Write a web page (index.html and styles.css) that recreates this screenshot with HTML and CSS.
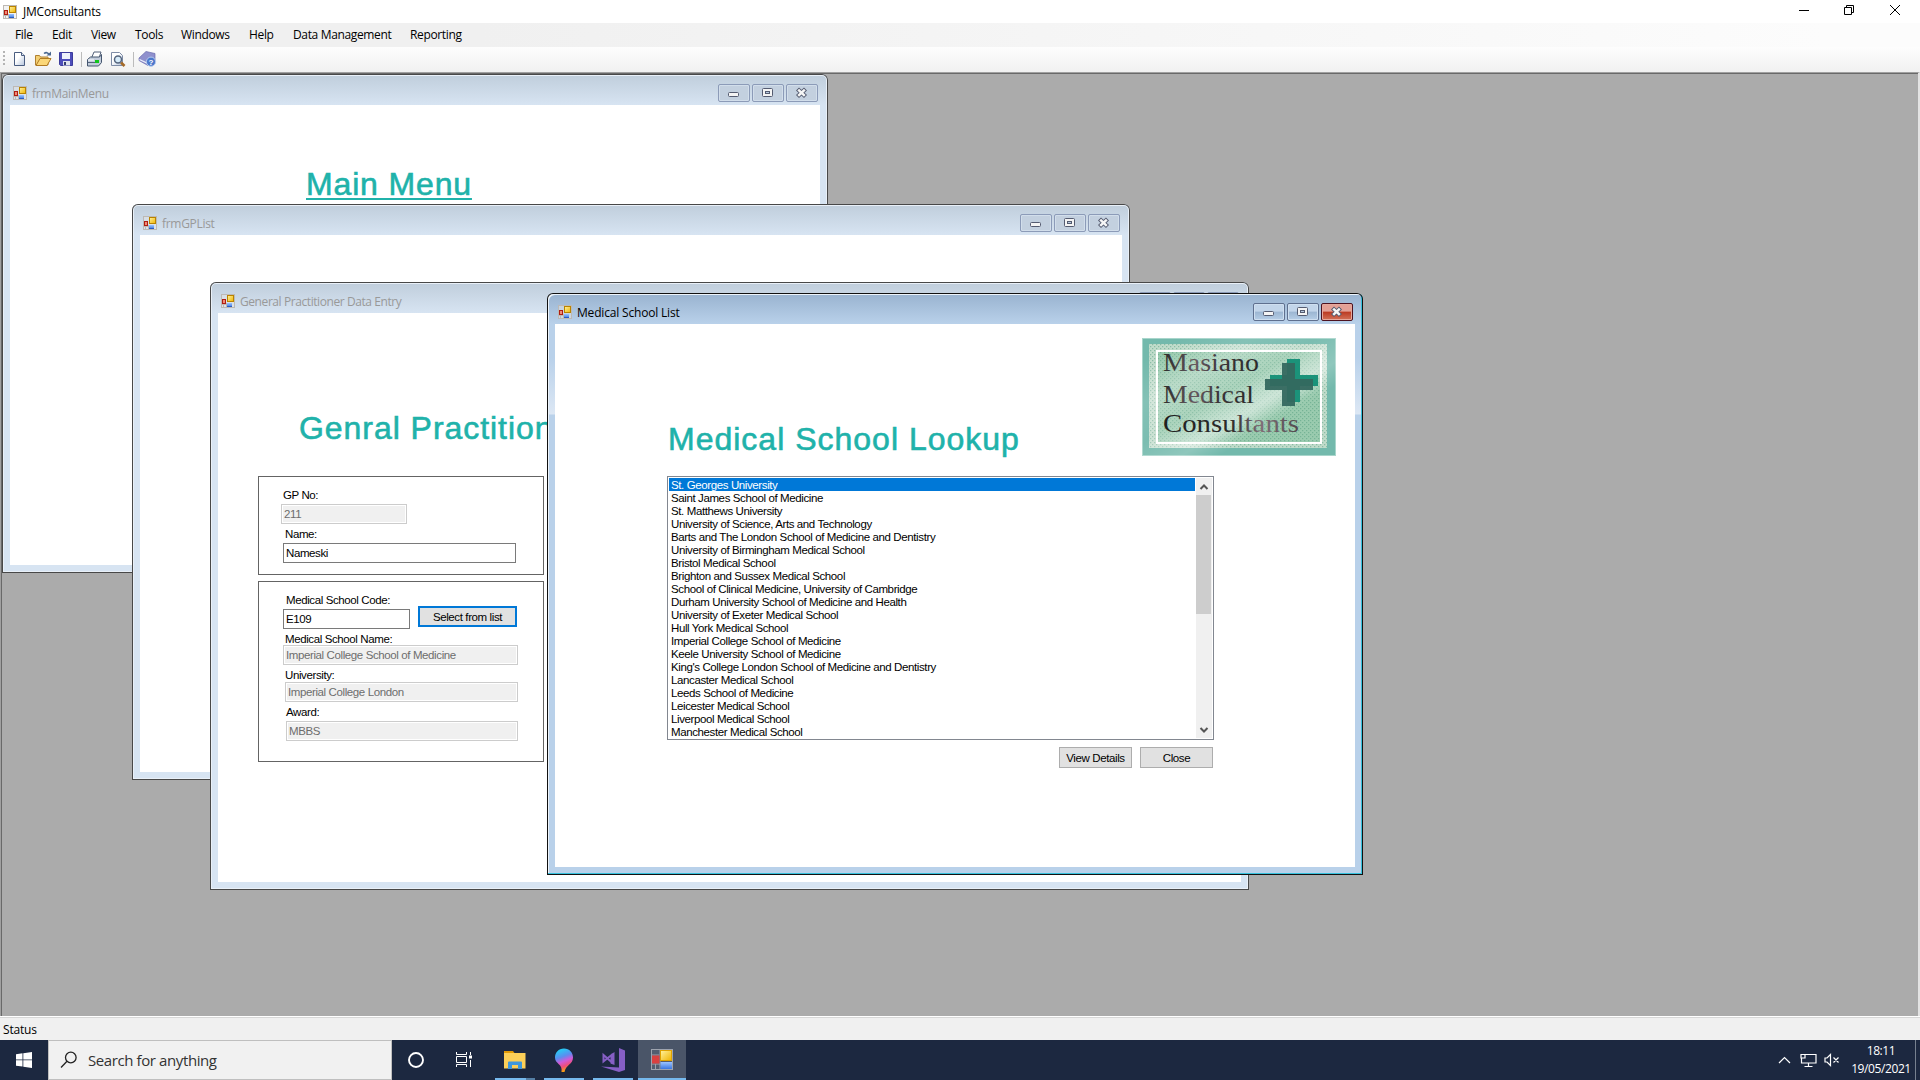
FILE: index.html
```
<!DOCTYPE html>
<html lang="en">
<head>
<meta charset="utf-8">
<title>JMConsultants</title>
<link rel="stylesheet" href="styles.css">
</head>
<body>
<svg width="0" height="0" class="defs">
  <defs>
    <linearGradient id="gold" x1="0" y1="0" x2="1" y2="1"><stop offset="0" stop-color="#fff2a0"/><stop offset="1" stop-color="#f0b400"/></linearGradient>
    <linearGradient id="paper" x1="0" y1="0" x2="1" y2="1"><stop offset="0.4" stop-color="#fff"/><stop offset="1" stop-color="#b4c4dc"/></linearGradient>
    <linearGradient id="blue" x1="0" y1="0" x2="0" y2="1"><stop offset="0" stop-color="#9cc4ff"/><stop offset="1" stop-color="#3a76e0"/></linearGradient>
    <symbol id="form" viewBox="0 0 14 14">
      <rect x="0.5" y="0.5" width="13" height="13" fill="#e6e6e6" fill-opacity=".5" stroke="#bdb9b4"/>
      <path d="M5.5 9v5M0 10.5h5M2.5 10v4" stroke="#bdb9b4" fill="none"/>
      <rect x="6.5" y="1.5" width="6" height="6" fill="url(#gold)" stroke="#b98300"/>
      <rect x="1.5" y="5.5" width="3" height="4" fill="#f08a74" stroke="#b01c10"/>
      <path d="M6 9h5v4H6z" fill="url(#blue)"/><path d="M6 12.5h5" stroke="#2c5cc0"/>
    </symbol>
    <symbol id="min" viewBox="1 1 30 16"><rect x="10.5" y="8.5" width="10" height="4" rx="1" fill="#f4f4f4" stroke="#545b70"/></symbol>
    <symbol id="max" viewBox="1 1 30 16"><rect x="10.500" y="4.500" width="10" height="8" rx="1" fill="#f4f4f4" stroke="#545b70"/><rect x="13.500" y="7.500" width="4" height="2" fill="#b5c8de" stroke="#545b70"/></symbol>
    <symbol id="cls" viewBox="1 1 30 16"><path d="M11.500 5l8 7.500M19.500 5l-8 7.500" stroke="#545b70" stroke-width="4.400"/><path d="M12.200 5.600l6.600 6.300M18.800 5.600l-6.600 6.300" stroke="#f6f6f6" stroke-width="2.500"/></symbol>
  </defs>
</svg>

<header class="titlebar">
  <svg class="app-icon" width="14" height="14"><use href="#form"/></svg>
  <span class="app-title">JMConsultants</span>
  <svg class="sysbuttons" width="120" height="23" viewBox="0 0 120 23" fill="none" stroke="#000">
    <path d="M8 10.500h10"/><path d="M53.500 7.500h7v7h-7zM55.500 7V5.500h7v7H61"/><path d="M99 5l10 10M109 5L99 15"/>
  </svg>
</header>
<nav class="menubar">
  <span class="m-file">File</span><span class="m-edit">Edit</span><span class="m-view">View</span><span class="m-tools">Tools</span><span class="m-windows">Windows</span><span class="m-help">Help</span><span class="m-data">Data Management</span><span class="m-report">Reporting</span>
</nav>
<div class="toolbar">
  <svg width="170" height="25" viewBox="0 0 170 25">
    <path d="M4 4v15" stroke="#b4b4b4" stroke-width="2" stroke-dasharray="2 2"/>
    <path d="M14.500 5.500h7l3 3v10h-10z" fill="url(#paper)" stroke="#4a5d80"/><path d="M21.500 5.500v3h3" fill="#dfe7f2" stroke="#4a5d80"/>
    <path d="M35.500 18V8.500h4l1 1.500h7.500V18z" fill="#f3cf73" stroke="#b08030"/><path d="M36 18.500l4-7h11l-4 7z" fill="#fbd778" stroke="#b07a22"/><path d="M44 6.500c2-1.500 4-1 5 1" stroke="#4a6890" fill="none" stroke-width="1.500"/><path d="M46.500 8.500H51V4.500z" fill="#4a6890"/>
    <path d="M59.500 5.500h13v13h-12l-1-1z" fill="#4d4dba" stroke="#3c3c9c"/><path d="M62 6h8v6h-8z" fill="#eef2fb"/><path d="M63 14h7v4.500h-7z" fill="#dfe4ee"/><path d="M64 15h2v3h-2z" fill="#333b70"/>
    <path d="M81.500 5v15M133.500 5v15" stroke="#bcbcbc"/>
    <path d="M91.500 11l2.500-6h7l-2 6z" fill="#fff" stroke="#526078"/><path d="M87.500 12.500l3-2.500h9l2-2.500v8l-3 3.500h-11z" fill="#c3cddb" stroke="#45566f"/><path d="M88 15.500h11" stroke="#53637b"/><rect x="95" y="13" width="4" height="3" fill="#12c51c"/><path d="M88 13h6" stroke="#fff"/>
    <path d="M111.500 5.500h8l3 3v10h-11z" fill="url(#paper)" stroke="#7e8ca6"/><circle cx="118" cy="12.500" r="3.500" fill="#d7ecfa" stroke="#55657e" stroke-width="1.500"/><path d="M121 15.500l3.500 3.500" stroke="#a46a28" stroke-width="2.600"/>
    <path d="M139 11l7-6.500 9 2v7l-7 5-9-5z" fill="#8f90cd" stroke="#6a6baf" stroke-width=".7"/><path d="M139.500 12.500l8.500 4 6-4" stroke="#eceefa" stroke-width="1.300" fill="none"/><circle cx="151" cy="14.700" r="4.600" fill="#4c78cc" stroke="#b5cbee"/>
    <text x="151" y="18" class="help-mark">?</text>
  </svg>
</div>

<main class="mdi">
  <section class="win win-menu">
    <div class="caption"><svg width="14" height="14"><use href="#form"/></svg><span class="t-main">frmMainMenu</span>
      <div class="ctl"><svg><use href="#min"/></svg><svg><use href="#max"/></svg><svg><use href="#cls"/></svg></div></div>
    <div class="client"><h1 class="h-menu">Main Menu</h1></div>
  </section>
  <section class="win win-gplist">
    <div class="caption"><svg width="14" height="14"><use href="#form"/></svg><span class="t-gp">frmGPList</span>
      <div class="ctl"><svg><use href="#min"/></svg><svg><use href="#max"/></svg><svg><use href="#cls"/></svg></div></div>
    <div class="client"></div>
  </section>
  <section class="win win-entry">
    <div class="caption"><svg width="14" height="14"><use href="#form"/></svg><span class="t-entry">General Practitioner Data Entry</span>
      <div class="ctl"><svg><use href="#min"/></svg><svg><use href="#max"/></svg><svg><use href="#cls"/></svg></div></div>
    <div class="client">
      <h1 class="h-entry">Genral Practitioner</h1>
      <div class="group g-person">
        <label class="l-no">GP No:</label><div class="field off f-no">211</div>
        <label class="l-name">Name:</label><div class="field f-name">Nameski</div>
      </div>
      <div class="group g-school">
        <div class="code-row">
          <div><label class="l-code">Medical School Code:</label><div class="field f-code">E109</div></div>
          <div class="button picked">Select from list</div>
        </div>
        <label class="l-sname">Medical School Name:</label><div class="field off f-sname">Imperial College School of Medicine</div>
        <label class="l-uni">University:</label><div class="field off f-uni">Imperial College London</div>
        <label class="l-award">Award:</label><div class="field off f-award">MBBS</div>
      </div>
    </div>
  </section>
  <section class="win active win-lookup">
    <div class="caption"><svg width="14" height="14"><use href="#form"/></svg><span class="t-lookup">Medical School List</span>
      <div class="ctl"><svg><use href="#min"/></svg><svg><use href="#max"/></svg><svg class="red"><use href="#cls"/></svg></div></div>
    <div class="client">
      <svg class="logo" width="194" height="118" viewBox="0 0 194 118">
        <defs>
          <linearGradient id="sheen" x1="0" y1="0" x2="1" y2="1"><stop offset=".1" stop-color="#fff" stop-opacity="0"/><stop offset=".28" stop-color="#fff" stop-opacity=".3"/><stop offset=".45" stop-color="#fff" stop-opacity=".15"/><stop offset=".6" stop-color="#fff" stop-opacity=".5"/><stop offset=".7" stop-color="#fff" stop-opacity="0"/></linearGradient>
          <linearGradient id="ink" x1="0" y1="0" x2="1" y2="0"><stop offset="0" stop-color="#2c2c2c"/><stop offset=".35" stop-color="#665a60"/><stop offset=".6" stop-color="#3c3538"/><stop offset="1" stop-color="#2c2b2c"/></linearGradient>
          <linearGradient id="ink3" x1="0" y1="0" x2="1" y2="0"><stop offset="0" stop-color="#202020"/><stop offset=".5" stop-color="#2c2a2b"/><stop offset=".72" stop-color="#806f78"/><stop offset="1" stop-color="#51494d"/></linearGradient>
          <pattern id="dots" width="4" height="4" patternUnits="userSpaceOnUse"><path d="M0 0h1.300v1.300H0zM2 2h1.300v1.300H2z" fill="#529b7e" fill-opacity=".5"/></pattern>
        </defs>
        <rect width="194" height="118" fill="#73b9ac"/><rect x=".5" y=".5" width="193" height="117" fill="none" stroke="#a8d5cb"/>
        <rect x="7" y="6" width="178" height="104" fill="#c1dccb"/>
        <rect x="15" y="13" width="164" height="92" fill="#9acbaf"/>
        <rect x="7" y="6" width="178" height="104" fill="url(#dots)"/>
        <rect width="194" height="118" fill="url(#sheen)" opacity=".4"/>
        <rect x="7" y="6" width="178" height="104" fill="url(#sheen)" opacity=".8"/>
        <rect x="15" y="13" width="164" height="92" fill="none" stroke="#fff" stroke-width="2"/>
        <path d="M145 21h13v16h18v11h-18v16h-13V48h-17V37h17z" fill="#1b937a"/>
        <path d="M140 25h13v16h18v11h-18v16h-13V52h-17V41h17z" fill="#34685f" fill-opacity=".95"/>
        <g class="logo-text" fill="url(#ink)">
          <text x="21" y="33" textLength="96" lengthAdjust="spacingAndGlyphs">Masiano</text>
          <text x="21" y="65" textLength="91" lengthAdjust="spacingAndGlyphs">Medical</text>
          <text x="21" y="94" textLength="136" lengthAdjust="spacingAndGlyphs" fill="url(#ink3)">Consultants</text>
        </g>
      </svg>
      <h1 class="h-lookup">Medical School Lookup</h1>
      <div class="listbox">
        <ul>
          <li class="sel">St. Georges University</li><li>Saint James School of Medicine</li><li>St. Matthews University</li><li>University of Science, Arts and Technology</li><li>Barts and The London School of Medicine and Dentistry</li><li>University of Birmingham Medical School</li><li>Bristol Medical School</li><li>Brighton and Sussex Medical School</li><li>School of Clinical Medicine, University of Cambridge</li><li>Durham University School of Medicine and Health</li><li>University of Exeter Medical School</li><li>Hull York Medical School</li><li>Imperial College School of Medicine</li><li>Keele University School of Medicine</li><li>King's College London School of Medicine and Dentistry</li><li>Lancaster Medical School</li><li>Leeds School of Medicine</li><li>Leicester Medical School</li><li>Liverpool Medical School</li><li>Manchester Medical School</li>
        </ul>
        <div class="scroll">
          <svg width="16" height="17" viewBox="0 0 16 17"><path d="M4.500 11L8 7.500l3.500 3.500" fill="none" stroke="#555" stroke-width="2"/></svg>
          <div class="thumb"></div>
          <svg width="16" height="17" viewBox="0 0 16 17"><path d="M4.500 7L8 10.500 11.500 7" fill="none" stroke="#555" stroke-width="2"/></svg>
        </div>
      </div>
      <div class="actions"><div class="button">View Details</div><div class="button">Close</div></div>
    </div>
  </section>
</main>
<div class="statusbar"><span>Status</span></div>
<footer class="taskbar">
  <div class="start"><svg width="16" height="16" viewBox="0 0 16 16" fill="#fff"><path d="M0 2.200l6.500-.9v6.200H0zM7.300 1.200L16 0v7.500H7.300zM0 8.300h6.500v6.200L0 13.700zM7.300 8.300H16V16l-8.700-1.200z"/></svg></div>
  <div class="search"><svg width="18" height="18" viewBox="0 0 18 18" fill="none" stroke="#222" stroke-width="1.300"><circle cx="10.800" cy="6.500" r="5.300"/><path d="M7 10.300L1 16.500"/></svg><span>Search for anything</span></div>
  <div class="task"><svg width="48" height="40" viewBox="0 0 48 40"><circle cx="24" cy="20" r="7" fill="none" stroke="#fff" stroke-width="1.900"/></svg></div>
  <div class="task"><svg width="48" height="40" viewBox="0 0 48 40" fill="none" stroke="#fff"><path d="M16.500 12v2.500h10V12M16.500 27v-2.500h10V27M16.500 16.500h10v6h-10zM30.500 12v3M30.500 20v7"/><path d="M29 15.500h3v3h-3z" fill="#fff" stroke="none"/></svg></div>
  <div class="task gap"><svg width="48" height="40" viewBox="0 0 48 40"><path d="M13 11h9l1.500 2H13z" fill="#e19a06"/><path d="M13 13h21.500v15.500H13z" fill="#fbcf58"/><path d="M17 29v-6.500q0-1 1-1h12q1 0 1 1V29h-4v-4h-6v4z" fill="#3e97dc"/><path d="M4 38h31v2H4z" fill="#76b9ed"/><path d="M35 38h9v2h-9z" fill="#557fa5"/></svg></div>
  <div class="task"><svg width="48" height="40" viewBox="0 0 48 40"><defs><linearGradient id="pin" x1=".3" y1="0" x2=".6" y2="1"><stop offset="0" stop-color="#1ed4f5"/><stop offset=".35" stop-color="#5b8df0"/><stop offset=".55" stop-color="#d05ad8"/><stop offset=".75" stop-color="#ef4e78"/><stop offset=".95" stop-color="#f8a30c"/></linearGradient></defs><path d="M24 8.500c5.500 0 9 4 9 9 0 7-7 7-8.500 14.500h-3C23 24 15 24 15 17.500c0-5 3.500-9 9-9z" fill="url(#pin)"/><path d="M4 38h40v2H4z" fill="#76b9ed"/></svg></div>
  <div class="task"><svg width="48" height="40" viewBox="0 0 48 40"><path d="M30 8l6 2.500v19.500L30 32l-18-5.500 18 1z" fill="#865fc5"/><path d="M14.500 15v6.500l8-6.500v7z" fill="none" stroke="#865fc5" stroke-width="2"/><path d="M25.500 12v13l-4-1.500 1-9.500z" fill="#865fc5"/><path d="M4 38h40v2H4z" fill="#76b9ed"/></svg></div>
  <div class="task current"><svg width="48" height="40" viewBox="0 0 48 40"><rect x="13.500" y="9.500" width="21" height="20" fill="#525d70" stroke="#9da3ae"/><path d="M22 9v20M13 24h9M17.500 24v6M13 15h8" stroke="#9da3ae"/><rect x="22.500" y="10.500" width="11" height="10" fill="url(#gold)" stroke="#e0a200"/><rect x="14" y="15.500" width="7.500" height="8" fill="#d94040"/><rect x="22.500" y="22" width="11.500" height="7" fill="url(#blue)"/><path d="M0 38h48v2H0z" fill="#76b9ed"/></svg></div>
  <svg class="tray" width="70" height="40" viewBox="0 0 70 40" fill="none" stroke="#fff" stroke-width="1.200"><path d="M2 23l5.500-5.500L13 23"/><path d="M28 14.500h11v8.500H24.500V18M31.500 23v3.500M27.500 26.500h8M24 14.500h4v3.500h-4z"/><path d="M48 18h2l3.500-3.500v11L50 22h-2zM56.500 17.500l5 5M61.500 17.500l-5 5"/></svg>
  <div class="clock"><span>18:11</span><span>19/05/2021</span></div>
  <div class="peek"></div>
</footer>
</body>
</html>
```
FILE: styles.css
```
* { box-sizing: border-box; }
body { margin: 0; width: 1920px; height: 1080px; overflow: hidden; display: flex; flex-direction: column; background: #f0f0f0; font: 12px/16px "Open Sans", "Noto Sans", sans-serif; color: #000; white-space: nowrap; }
.defs { position: absolute; }
h1 { margin: 0; font: 32px/38px "Liberation Sans", Arial, sans-serif; color: #20b2aa; -webkit-text-stroke: 0.6px #20b2aa; width: max-content; }
ul { margin: 0; padding: 0; list-style: none; }
svg { display: block; flex: none; }

.titlebar { height: 23px; background: #fff; display: flex; align-items: center; flex: none; }
.app-icon { margin-left: 3px; }
.app-title { margin-left: 6px; letter-spacing: -0.22px; }
.sysbuttons { margin-left: auto; margin-right: 9px; }

.menubar { height: 24px; flex: none; display: flex; align-items: center; padding-left: 15px; letter-spacing: -0.35px; background: linear-gradient(90deg, #f0f0f0 25%, #fcfcfc 95%); }
.m-file { width: 37px; } .m-edit { width: 39px; } .m-view { width: 44px; } .m-tools { width: 46px; }
.m-windows { width: 68px; } .m-help { width: 44px; } .m-data { width: 117px; }
.toolbar { height: 25px; flex: none; background: linear-gradient(#fdfdfd, #f1f1f1); }
.help-mark { font: bold 8px "Liberation Sans", sans-serif; fill: #fff; text-anchor: middle; }

.mdi { position: relative; height: 944px; flex: none; overflow: hidden; background: #ababab; border-top: 1px solid #a0a0a0; border-left: 1px solid #a0a0a0; border-right: 2px solid #e3e3e3; box-shadow: inset 1px 1px #696969; }

.win { position: absolute; padding: 0 8px 8px; background: linear-gradient(#bfcddb, #d7e4f2 31px); border-radius: 6px 6px 0 0; box-shadow: inset 0 0 0 1px #484848, inset 0 0 0 2px #e9f0f8; }
.win-menu { left: 1px; top: 1px; width: 826px; height: 499px; }
.win-gplist { left: 131px; top: 131px; width: 998px; height: 576px; }
.win-entry { left: 209px; top: 209px; width: 1039px; height: 608px; }
.win-lookup { left: 546px; top: 220px; width: 816px; height: 582px; }
.win.active { background: linear-gradient(#98b2cf, #b9d1ea 31px, #b9d1ea 65px, #dce7f4 121px, #b9d1ea 122px); box-shadow: inset 0 0 0 1px #111, inset -2px -2px #35c1dc, inset 2px 2px #edf4fb; }
.caption { height: 31px; display: flex; color: #999; padding-left: 3px; padding-top: 10px; letter-spacing: -0.3px; }
.caption > svg { margin-top: 2px; }
.caption > span { margin-left: 5px; margin-top: 2px; }
.caption .t-entry { letter-spacing: -0.42px; }
.caption .t-lookup { letter-spacing: -0.18px; }
.active .caption { color: #000; }
.ctl { margin-left: auto; margin-right: 2px; display: flex; gap: 2px; }
.ctl svg { width: 32px; height: 18px; border: 1px solid #8c9bb8; border-radius: 2px; box-shadow: inset 0 0 0 1px #d2deeb; background: #c3d0df; }
.active .ctl svg { border-color: #5f708f; background: linear-gradient(#c2d5ea 45%, #9cb6d2 50%, #b6cee7); box-shadow: inset 0 0 0 1px #cfdff0; }
.active .ctl .red { border-color: #4d1220; background: linear-gradient(#e3a096 45%, #bb3a22 50%, #d27259); box-shadow: inset 0 0 0 1px #e6a89d; }
.client { background: #fff; height: calc(100% - 31px); overflow: hidden; font: 11.5px/13px "Liberation Sans", Arial, sans-serif; letter-spacing: -0.39px; }

.h-menu { margin: 60px 0 0 296px; letter-spacing: 0.85px; text-decoration: underline; text-decoration-thickness: 2px; text-underline-offset: 3px; }
.h-entry { margin: 96px 0 0 81px; letter-spacing: 0.95px; }
.group { width: 286px; border: 1px solid #646464; margin-left: 40px; display: flex; flex-direction: column; }
.g-person { margin-top: 29px; height: 99px; padding: 12px 0 0 22px; }
.g-school { margin-top: 6px; height: 181px; padding: 12px 0 0 24px; }
.group label { display: block; height: 13px; }
.field { height: 20px; border: 1px solid #7a7a7a; background: #fff; padding: 3px 2px; }
.field.off { background: #f0f0f0; border-color: #ccc; box-shadow: inset 0 0 0 1px #fff; color: #6d6d6d; }
.l-no { margin-left: 2px; } .f-no { width: 126px; margin-top: 2px; }
.l-name { margin: 4px 0 0 4px; } .f-name { width: 233px; margin: 2px 0 0 2px; }
.code-row { display: flex; gap: 8px; }
.l-code { margin-left: 3px; } .f-code { width: 127px; margin-top: 2px; }
.picked.button { margin-top: 12px; width: 99px; border: 2px solid #0078d7; line-height: 18px; }
.l-sname { margin: 4px 0 0 2px; } .f-sname { width: 235px; margin-top: -1px; }
.l-uni { margin: 4px 0 0 2px; } .f-uni { width: 233px; margin-left: 2px; }
.l-award { margin: 4px 0 0 3px; } .f-award { width: 232px; margin: 2px 0 0 3px; }
.button { width: 73px; height: 21px; background: #e1e1e1; border: 1px solid #adadad; text-align: center; line-height: 20px; }

.logo { margin: 14px 0 0 587px; }
.logo-text { font: 25px "Liberation Serif", serif; letter-spacing: 0; }
.h-lookup { margin: -36px 0 0 113px; letter-spacing: 1px; }
.listbox { margin: 18px 0 0 112px; width: 547px; height: 264px; border: 1px solid #828790; padding: 1px; display: flex; gap: 1px; }
.listbox ul { width: 526px; }
.listbox li { height: 13px; padding-left: 2px; line-height: 15px; }
.listbox .sel { background: #0078d7; color: #fff; }
.scroll { width: 16px; background: #f0f0f0; display: flex; flex-direction: column; }
.thumb { width: 15px; height: 119px; background: #cdcdcd; margin-bottom: auto; }
.actions { display: flex; gap: 8px; margin: 7px 0 0 504px; }

.statusbar { height: 24px; flex: none; border-top: 1px solid #fff; padding: 5px 0 0 3px; letter-spacing: -0.2px; box-shadow: inset 0 1px #d7d7d7; }
.taskbar { height: 40px; flex: none; background: #1c2840; display: flex; color: #fff; }
.start { width: 48px; display: flex; align-items: center; justify-content: center; }
.search { width: 344px; background: #f1f1f1; border: 1px solid #bfbfbf; display: flex; align-items: center; padding-left: 11px; gap: 10px; color: #333; font-size: 15px; letter-spacing: -0.4px; }
.task { width: 48px; margin-right: 1px; }
.task:nth-child(3) { margin-right: 0; }
.gap { margin-left: 2px; }
.current { background: #4a5568; }
.tray { margin-left: auto; }
.clock { width: 68px; display: flex; flex-direction: column; align-items: center; line-height: 18px; padding-top: 2px; letter-spacing: -0.4px; }
.peek { width: 5px; border-left: 1px solid #76808f; }
```
